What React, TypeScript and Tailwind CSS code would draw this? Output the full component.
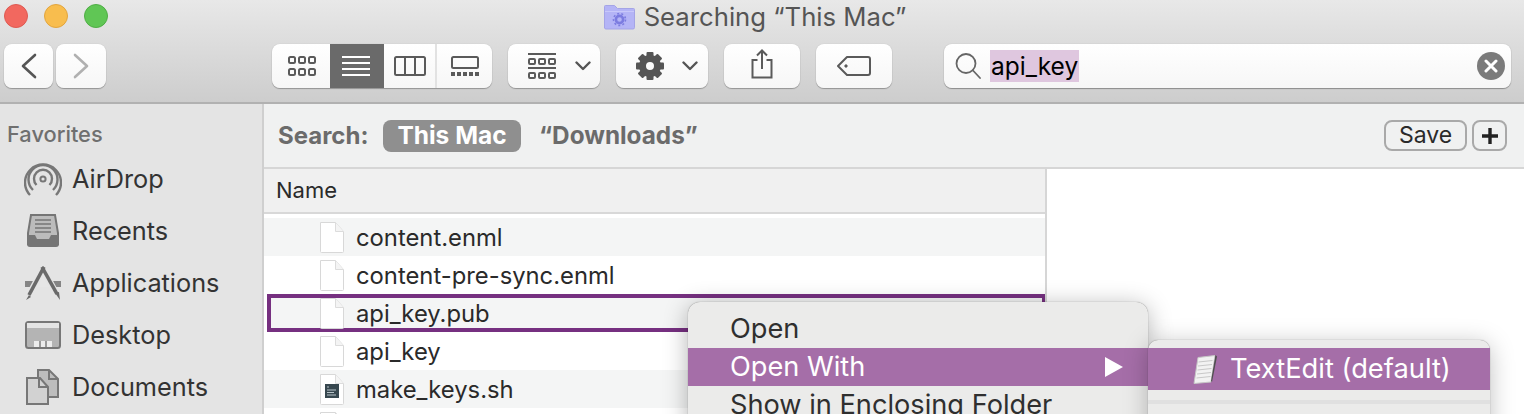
import React from "react";

const FONT = "font-['Inter','Liberation_Sans',sans-serif]";

function Btn({ w, children, cls = "" }: { w: string; children: React.ReactNode; cls?: string }) {
  return (
    <div className={`${w} h-[44px] rounded-[8px] bg-gradient-to-b from-[#ffffff] to-[#f6f6f6] shadow-[0_1px_1px_rgba(0,0,0,0.28),0_0_1px_rgba(0,0,0,0.2)] flex items-center justify-center shrink-0 ${cls}`}>
      {children}
    </div>
  );
}

const Chevron = () => (
  <svg width="16" height="10" viewBox="0 0 16 10" fill="none" stroke="#555" strokeWidth="2.4" strokeLinecap="round" strokeLinejoin="round">
    <path d="M1.5 1.5 8 8l6.5-6.5" />
  </svg>
);

const IconGrid = () => (
  <svg width="28" height="20" viewBox="0 0 28 20" fill="none" stroke="#5a5a5a" strokeWidth="2">
    {[1, 11, 21].map((x) => (
      <g key={x}>
        <rect x={x} y="1" width="6" height="6" rx="1.5" />
        <rect x={x} y="13" width="6" height="6" rx="1.5" />
      </g>
    ))}
  </svg>
);

const IconList = () => (
  <svg width="28" height="20" viewBox="0 0 28 20" fill="#fff">
    <rect y="0" width="28" height="2" />
    <rect y="6" width="28" height="2" />
    <rect y="12" width="28" height="2" />
    <rect y="18" width="28" height="2" />
  </svg>
);

const IconColumns = () => (
  <svg width="32" height="20" viewBox="0 0 32 20" fill="none" stroke="#5a5a5a" strokeWidth="2">
    <rect x="1" y="1" width="30" height="18" rx="1.5" />
    <path d="M11 1v18M21 1v18" />
  </svg>
);

const IconGallery = () => (
  <svg width="28" height="20" viewBox="0 0 28 20" fill="none">
    <rect x="1" y="1" width="26" height="11" rx="1.5" stroke="#5a5a5a" strokeWidth="2" />
    <g fill="#5a5a5a">
      {[0, 6, 12, 18, 24].map((x) => (
        <rect key={x} x={x} y="16" width="4" height="4" />
      ))}
    </g>
  </svg>
);

const IconGroup = () => (
  <svg width="28" height="26" viewBox="0 0 28 26" fill="none" stroke="#5a5a5a" strokeWidth="2">
    <path d="M0 1h28M0 15h28" />
    {[1, 11, 21].map((x) => (
      <g key={x}>
        <rect x={x} y="6" width="6" height="5" rx="1" />
        <rect x={x} y="20" width="6" height="5" rx="1" />
      </g>
    ))}
  </svg>
);

const IconGear = () => (
  <svg width="28" height="28" viewBox="0 0 28 28">
    <g fill="#555">
      {[0, 45, 90, 135, 180, 225, 270, 315].map((a) => (
        <rect key={a} x="10.5" y="0" width="7" height="7" rx="1" transform={`rotate(${a} 14 14)`} />
      ))}
    </g>
    <circle cx="14" cy="14" r="7.5" fill="none" stroke="#555" strokeWidth="7" />
  </svg>
);

const IconShare = () => (
  <svg width="22" height="30" viewBox="0 0 22 30" fill="none" stroke="#5a5a5a" strokeWidth="2">
    <path d="M6.5 11H1.5v17.5h19V11h-5" />
    <path d="M11 20V1.5M6 6.5l5-5 5 5" />
  </svg>
);

const IconTag = () => (
  <svg width="34" height="20" viewBox="0 0 34 20" fill="none" stroke="#5a5a5a" strokeWidth="2">
    <path d="M10 1h21a2 2 0 0 1 2 2v14a2 2 0 0 1-2 2H10L1 10z" strokeLinejoin="round" />
    <circle cx="9" cy="10" r="1.2" fill="#5a5a5a" strokeWidth="1" />
  </svg>
);

const FolderIcon = () => (
  <svg width="31" height="25" viewBox="0 0 31 25">
    <path d="M0.5 1.5a1 1 0 0 1 1-1h9l3 3h16a1 1 0 0 1 1 1v18a1.5 1.5 0 0 1-1.5 1.5h-27A1.5 1.5 0 0 1 .5 23z" fill="#b4b4f6" stroke="#a4a4e6" />
    <path d="M1 6.5h29" stroke="#c8c8fa" />
    <circle cx="15.5" cy="14.5" r="3.6" fill="none" stroke="#7c7ce0" strokeWidth="2.6" />
    <circle cx="15.5" cy="14.5" r="6" fill="none" stroke="#7c7ce0" strokeWidth="1.6" strokeDasharray="2 2.2" />
  </svg>
);

const FileIcon = ({ script = false }: { script?: boolean }) => (
  <svg width="24" height="31" viewBox="0 0 24 31" className="shrink-0">
    <path d="M.5.5h15l8 9v20a1 1 0 0 1-1 1h-21a1 1 0 0 1-1-1z" fill="#fff" stroke="#d8d8d8" />
    <path d="M15.5.5v9h8" fill="#f4f4f4" stroke="#dcdcdc" />
    {script && (
      <g>
        <rect x="5" y="10" width="14" height="14" fill="#37474f" />
        <path d="M7 13h2M7 16h9M7 18.5h7M7 21h9" stroke="#b8c4ca" strokeWidth="1" />
      </g>
    )}
  </svg>
);

const AirDrop = () => (
  <svg width="38" height="36" viewBox="0 0 38 36" fill="none" stroke="#777" strokeWidth="2.4">
    <circle cx="19" cy="18" r="2.6" strokeWidth="2" />
    <path d="M12.5 24a9 9 0 1 1 13 0" />
    <path d="M9 29a14.5 14.5 0 1 1 20 0" />
    <path d="M6 34a18 18 0 1 1 26 0" />
  </svg>
);

const Recents = () => (
  <svg width="34" height="34" viewBox="0 0 34 34">
    <path d="M5 1h24l3 18v11H2V19z" fill="#bcbcbc" stroke="#757575" strokeWidth="2" />
    <path d="M9 6h16M9 10h16M9 14h16M9 18h16" stroke="#757575" strokeWidth="1.5" />
    <path d="M1 21h8l2 4h12l2-4h8v9a3 3 0 0 1-3 3H4a3 3 0 0 1-3-3z" fill="#757575" />
  </svg>
);

const Applications = () => (
  <svg width="38" height="36" viewBox="0 0 38 36" fill="none">
    <path d="M1 16h36v6H1z" fill="#858585" />
    <path d="M19 8 12 22h14z" fill="#e6e6e6" />
    <path d="M20 2 3 34M18 2l16 30" stroke="#e4e4e4" strokeWidth="6.5" />
    <path d="M20 2 5 30" stroke="#6a6a6a" strokeWidth="3.6" />
    <path d="M5 30 2 35l5-3z" fill="#6a6a6a" />
    <path d="M18 2l15 27" stroke="#6a6a6a" strokeWidth="3.6" />
    <path d="M31 28l5 7-1-8z" fill="#6a6a6a" />
  </svg>
);

const Desktop = () => (
  <svg width="36" height="28" viewBox="0 0 36 28">
    <rect x="1" y="1" width="34" height="26" rx="2.5" fill="#b4b4b4" stroke="#777" strokeWidth="2" />
    <rect x="2" y="2" width="32" height="5" fill="#e4e4e4" />
    <path d="M9 26v-6h18v6z" fill="#ececec" />
    <path d="M15 20v6M21 20v6" stroke="#777" strokeWidth="1.4" />
  </svg>
);

const Documents = () => (
  <svg width="34" height="36" viewBox="0 0 34 36">
    <path d="M12 1h11l9 9v18H12z" fill="#bdbdbd" stroke="#777" strokeWidth="2" />
    <path d="M1 9h13l8 9v17H1z" fill="#d2d2d2" stroke="#777" strokeWidth="2" />
    <path d="M13 9v9h9M23 1v9h9" fill="none" stroke="#777" strokeWidth="2" />
  </svg>
);

const TextEditIcon = () => (
  <svg width="28" height="30" viewBox="0 0 28 30" className="shrink-0">
    <path d="M6 3.5 23 1.5 19 28 2 29.5z" fill="#f2f2f2" stroke="#c6c6c6" />
    <path d="M6.5 8l14-1.5M6 12l14-1.5M5.5 16l14-1.5M5 20l14-1.5M4.5 24l14-1.5" stroke="#c8c8c8" strokeWidth="1" />
    <path d="M23.5 1 25 2.5 20 28l-1-1z" fill="#4f4f4f" />
  </svg>
);

const SIDE = [
  { label: "AirDrop", icon: <AirDrop /> },
  { label: "Recents", icon: <Recents /> },
  { label: "Applications", icon: <Applications /> },
  { label: "Desktop", icon: <Desktop /> },
  { label: "Documents", icon: <Documents /> },
];

function Row({ name, odd, selected, script }: { name: string; odd?: boolean; selected?: boolean; script?: boolean }) {
  return (
    <div className={`h-[38px] flex items-center shrink-0 ${odd ? "bg-[#f4f5f5]" : "bg-white"} ${selected ? "ml-[3px] mr-[-1px] border-[4px] border-[#763080] pl-[49px]" : "pl-[56px]"}`}>
      <FileIcon script={script} />
      <span className="ml-[12px] pt-[2px] text-[23.8px] text-[#2a2a2a] leading-none whitespace-nowrap">{name}</span>
    </div>
  );
}

export default function App() {
  return (
    <div className={`relative w-[1524px] h-[414px] overflow-hidden bg-white ${FONT}`}>
      <div className="h-[104px] bg-gradient-to-b from-[#e8e8e8] to-[#cdcdcd] border-b-2 border-[#b1b1b1] flex flex-col">
        <div className="h-[44px] pt-[4px] relative flex items-start justify-center shrink-0">
          <div className="absolute left-[4px] top-[4px] flex gap-[16px]">
            <div className="w-[24px] h-[24px] rounded-full bg-[#f2685f] border border-[#de5a52]" />
            <div className="w-[24px] h-[24px] rounded-full bg-[#f8bd4e] border border-[#e2a53e]" />
            <div className="w-[24px] h-[24px] rounded-full bg-[#60c655] border border-[#4fae45]" />
          </div>
          <div className="flex items-center gap-[9px] ml-[-14px] h-[26px]">
            <FolderIcon />
            <span className="text-[25.7px] text-[#555] leading-none whitespace-nowrap">Searching “This Mac”</span>
          </div>
        </div>
        <div className="flex items-start pl-[4px] h-[44px]">
          <div className="flex gap-[3px]">
            <Btn w="w-[49px]">
              <svg width="16" height="26" viewBox="0 0 16 26" fill="none" stroke="#555" strokeWidth="2.6" strokeLinecap="round" strokeLinejoin="round">
                <path d="M14 2 2 13l12 11" />
              </svg>
            </Btn>
            <Btn w="w-[50px]">
              <svg width="16" height="26" viewBox="0 0 16 26" fill="none" stroke="#b0b0b0" strokeWidth="2.6" strokeLinecap="round" strokeLinejoin="round">
                <path d="M2 2l12 11L2 24" />
              </svg>
            </Btn>
          </div>
          <div className="ml-[166px] w-[220px] h-[44px] rounded-[8px] bg-gradient-to-b from-[#ffffff] to-[#f6f6f6] shadow-[0_1px_1px_rgba(0,0,0,0.28),0_0_1px_rgba(0,0,0,0.2)] flex overflow-hidden shrink-0">
            <div className="w-[58px] flex items-center justify-center pl-[2px]"><IconGrid /></div>
            <div className="w-[54px] mt-[-1px] h-[46px] bg-[#6a6a6a] flex items-center justify-center pr-[2px]"><IconList /></div>
            <div className="w-[53px] border-r-2 border-[#e2e2e2] flex items-center justify-center"><IconColumns /></div>
            <div className="w-[55px] flex items-center justify-center"><IconGallery /></div>
          </div>
          <Btn w="w-[92px]" cls="ml-[16px] gap-[19px] pl-[11px]"><IconGroup /><Chevron /></Btn>
          <Btn w="w-[92px]" cls="ml-[16px] gap-[18px] pl-[10px]"><IconGear /><Chevron /></Btn>
          <Btn w="w-[76px]" cls="ml-[16px]"><div className="mt-[-4px]"><IconShare /></div></Btn>
          <Btn w="w-[76px]" cls="ml-[16px]"><IconTag /></Btn>
          <div className="ml-[52px] w-[567px] h-[44px] rounded-[8px] bg-gradient-to-b from-[#ffffff] to-[#f6f6f6] shadow-[0_1px_1px_rgba(0,0,0,0.32),0_0_1px_rgba(0,0,0,0.25)] flex items-center pl-[11px] pr-[6px] shrink-0">
            <svg width="26" height="28" viewBox="0 0 26 28" fill="none" stroke="#666" strokeWidth="1.8" strokeLinecap="round">
              <circle cx="11" cy="11.5" r="9.5" />
              <path d="M18 18.5l7 7.5" />
            </svg>
            <span className="ml-[9px] bg-[#dfc7df] text-black text-[24.5px] leading-[32px] h-[32px] px-[1px] whitespace-nowrap">api_key</span>
            <div className="ml-auto w-[28px] h-[28px] rounded-full bg-[#7b7b7b] flex items-center justify-center">
              <svg width="14" height="14" viewBox="0 0 14 14" stroke="#fff" strokeWidth="3" strokeLinecap="round">
                <path d="M2 2l10 10M12 2 2 12" />
              </svg>
            </div>
          </div>
        </div>
      </div>

      <div className="flex h-[310px]">
        <div className="w-[264px] shrink-0 bg-[#e4e4e4] border-r-2 border-[#cfcfcf] pt-[17px] overflow-hidden">
          <div className="pl-[7px] text-[21.8px] font-medium text-[#6f6f6f] leading-[26px] mb-[6px]">Favorites</div>
          {SIDE.map((s) => (
            <div key={s.label} className="h-[52px] flex items-center">
              <div className="w-[72px] flex justify-end shrink-0">
                <div className="w-[38px] flex justify-center mr-[10px]">{s.icon}</div>
              </div>
              <span className="text-[25.3px] text-[#333] leading-none whitespace-nowrap">{s.label}</span>
            </div>
          ))}
        </div>
        <div className="flex-1 flex flex-col min-w-0">
          <div className="h-[65px] shrink-0 bg-[#f0f1f1] border-b-2 border-[#d6d6d6] flex items-center pl-[14px] pr-[17px]">
            <span className="w-[92px] text-[24px] font-bold text-[#6b6b6b] whitespace-nowrap">Search:</span>
            <span className="ml-[13px] w-[138px] h-[32px] rounded-[8px] bg-[#8f8f8f] text-white text-[24.5px] font-bold flex items-center justify-center whitespace-nowrap">This Mac</span>
            <span className="ml-[18px] text-[24.3px] font-bold text-[#6b6b6b] whitespace-nowrap">“Downloads”</span>
            <div className="ml-auto flex gap-[5px]">
              <div className="w-[83px] h-[31px] rounded-[8px] border-2 border-[#a9a9a9] flex items-center justify-center text-[23px] text-[#2a2a2a]">Save</div>
              <div className="w-[35px] h-[31px] rounded-[8px] border-2 border-[#a9a9a9] flex items-center justify-center">
                <svg width="16" height="16" viewBox="0 0 16 16" stroke="#222" strokeWidth="3.4"><path d="M8 0v16M0 8h16" /></svg>
              </div>
            </div>
          </div>
          <div className="flex flex-1 min-h-0">
            <div className="w-[783px] shrink-0 border-r-2 border-[#d6d6d6] flex flex-col overflow-hidden">
              <div className="h-[45px] shrink-0 bg-[#f0f0f0] border-b-2 border-[#d8d8d8] flex items-center pl-[12px] text-[22px] text-[#2a2a2a]">Name</div>
              <div className="h-[4px] shrink-0" />
              <Row name="content.enml" odd />
              <Row name="content-pre-sync.enml" />
              <Row name="api_key.pub" odd selected />
              <Row name="api_key" />
              <Row name="make_keys.sh" odd script />
              <Row name="" />
            </div>
            <div className="flex-1 bg-white" />
          </div>
        </div>
      </div>

      <div className="absolute left-[688px] top-[302px] w-[460px] h-[130px] rounded-t-[12px] bg-[#ebebea] shadow-[0_4px_24px_rgba(0,0,0,0.3),0_0_1px_rgba(0,0,0,0.5)] pt-[8px] text-[27.2px] text-[#2f2f2f]">
        <div className="h-[38px] flex items-center pl-[42px] leading-none">Open</div>
        <div className="h-[38px] flex items-center pl-[42px] pr-[25px] bg-[#a56ea8] text-white leading-none">
          <span>Open With</span>
          <svg className="ml-auto" width="18" height="20" viewBox="0 0 18 20" fill="#fff"><path d="M0 0l18 10L0 20z" /></svg>
        </div>
        <div className="h-[38px] flex items-center pl-[42px] leading-none whitespace-nowrap">Show in Enclosing Folder</div>
      </div>
      <div className="absolute left-[1148px] top-[340px] w-[342px] h-[100px] rounded-t-[10px] bg-[#ebebea] shadow-[0_4px_24px_rgba(0,0,0,0.25),0_0_1px_rgba(0,0,0,0.5)] pt-[8px] text-[27.3px]">
        <div className="h-[42px] bg-[#a56ea8] text-white flex items-center pl-[44px] gap-[10px] leading-none whitespace-nowrap">
          <TextEditIcon />
          <span>TextEdit (default)</span>
        </div>
        <div className="mt-[10px] h-[4px] bg-[#e0e0e0]" />
      </div>
    </div>
  );
}
